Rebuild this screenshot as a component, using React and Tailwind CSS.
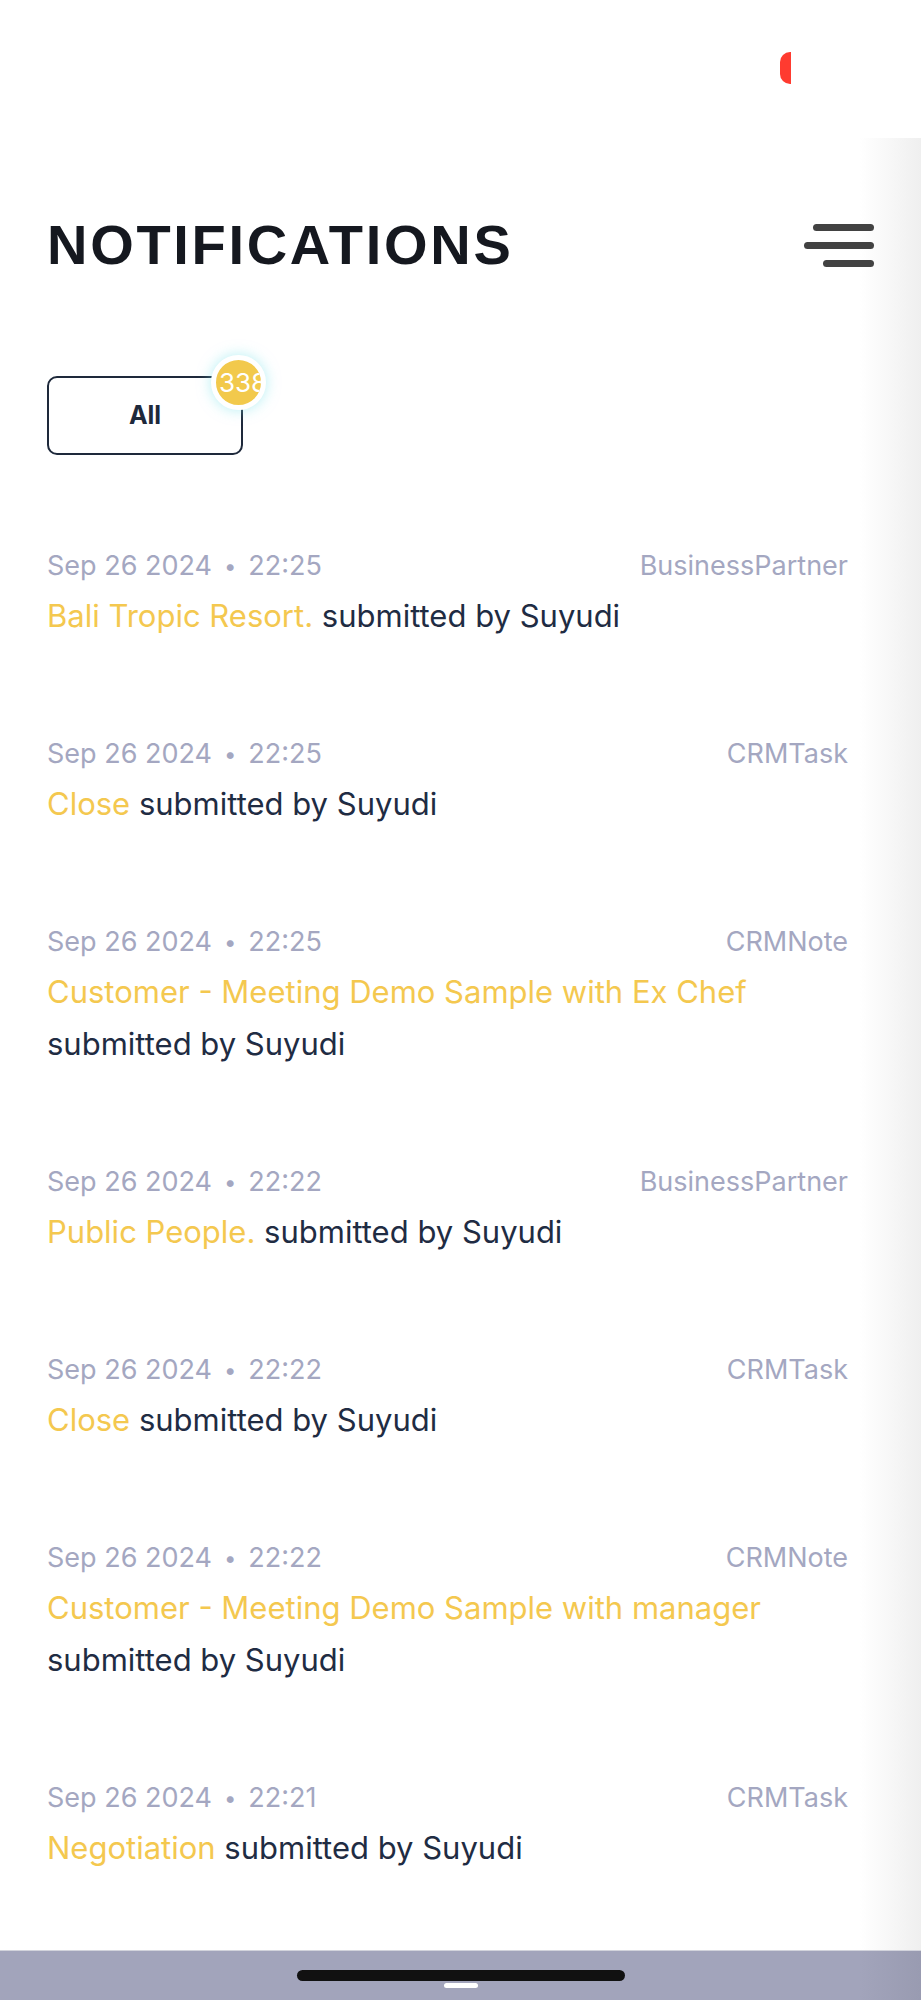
import React from 'react'

const items = [
  { date: 'Sep 26 2024', time: '22:25', type: 'BusinessPartner', title: 'Bali Tropic Resort.' },
  { date: 'Sep 26 2024', time: '22:25', type: 'CRMTask', title: 'Close' },
  { date: 'Sep 26 2024', time: '22:25', type: 'CRMNote', title: 'Customer - Meeting Demo Sample with Ex Chef' },
  { date: 'Sep 26 2024', time: '22:22', type: 'BusinessPartner', title: 'Public People.' },
  { date: 'Sep 26 2024', time: '22:22', type: 'CRMTask', title: 'Close' },
  { date: 'Sep 26 2024', time: '22:22', type: 'CRMNote', title: 'Customer - Meeting Demo Sample with manager' },
  { date: 'Sep 26 2024', time: '22:21', type: 'CRMTask', title: 'Negotiation' },
]

function NotificationItem({ item }) {
  return (
    <div className="pr-[26px]">
      <div className="flex items-center justify-between h-[40px] text-[27px] text-[#a4a7c1]">
        <div className="flex items-center gap-[12px]">
          <span>{item.date}</span>
          <span className="text-[22px]">•</span>
          <span>{item.time}</span>
        </div>
        <span>{item.type}</span>
      </div>
      <p className="mt-[4px] text-[31px] leading-[52px] text-[#1f2c43]">
        <span className="text-[#f4c84f]">{item.title}</span> submitted by Suyudi
      </p>
    </div>
  )
}

export default function App() {
  return (
    <div
      className="w-[921px] h-[2000px] flex flex-col bg-white"
      style={{ fontFamily: 'Inter, "Noto Sans", sans-serif' }}
    >
      {/* status strip */}
      <div className="h-[138px] flex justify-end pr-[130px] pt-[52px]">
        <div className="w-[11px] h-[32px] rounded-l-[10px] bg-[#ff3b30]" />
      </div>

      <main className="flex-1 px-[47px] pt-[75px] bg-[linear-gradient(to_right,#ffffff_860px,#efefef)]">
        <div className="flex items-center justify-between h-[64px]">
          <h1
            className="text-[56px] leading-[64px] font-bold tracking-[2.7px] text-[#15181f]"
            style={{ fontFamily: '"Liberation Sans", Arial, sans-serif' }}
          >
            NOTIFICATIONS
          </h1>
          <div className="flex flex-col items-end gap-[11px]">
            <span className="block w-[61px] h-[7px] rounded-full bg-[#424242]" />
            <span className="block w-[70px] h-[7px] rounded-full bg-[#424242]" />
            <span className="block w-[51px] h-[7px] rounded-full bg-[#424242]" />
          </div>
        </div>

        <div className="mt-[99px] flex">
          <button className="relative w-[196px] h-[79px] rounded-[10px] border-2 border-[#1e293b] bg-white text-[25px] font-bold text-[#1e293b]">
            All
            <span className="absolute left-[162px] top-[-23px] w-[55px] h-[55px] rounded-full border-[5px] border-white bg-[#f2c94c] shadow-[0_0_14px_rgba(120,225,235,0.55)] overflow-hidden flex items-center pl-[3px] text-[26px] font-normal leading-none text-white whitespace-nowrap">
              338
            </span>
          </button>
        </div>

        <div className="mt-[91px] flex flex-col gap-[92px]">
          {items.map((item, i) => (
            <NotificationItem key={i} item={item} />
          ))}
        </div>
      </main>

      {/* home indicator bar */}
      <div className="h-[50px] border-t border-[#d2d3dc] bg-[linear-gradient(to_right,#a2a4bb_860px,#999bb1)] flex flex-col items-center pt-[19px]">
        <div className="w-[328px] h-[11px] rounded-full bg-[#111111]" />
        <div className="mt-[2px] w-[34px] h-[5px] rounded-full bg-white" />
      </div>
    </div>
  )
}
